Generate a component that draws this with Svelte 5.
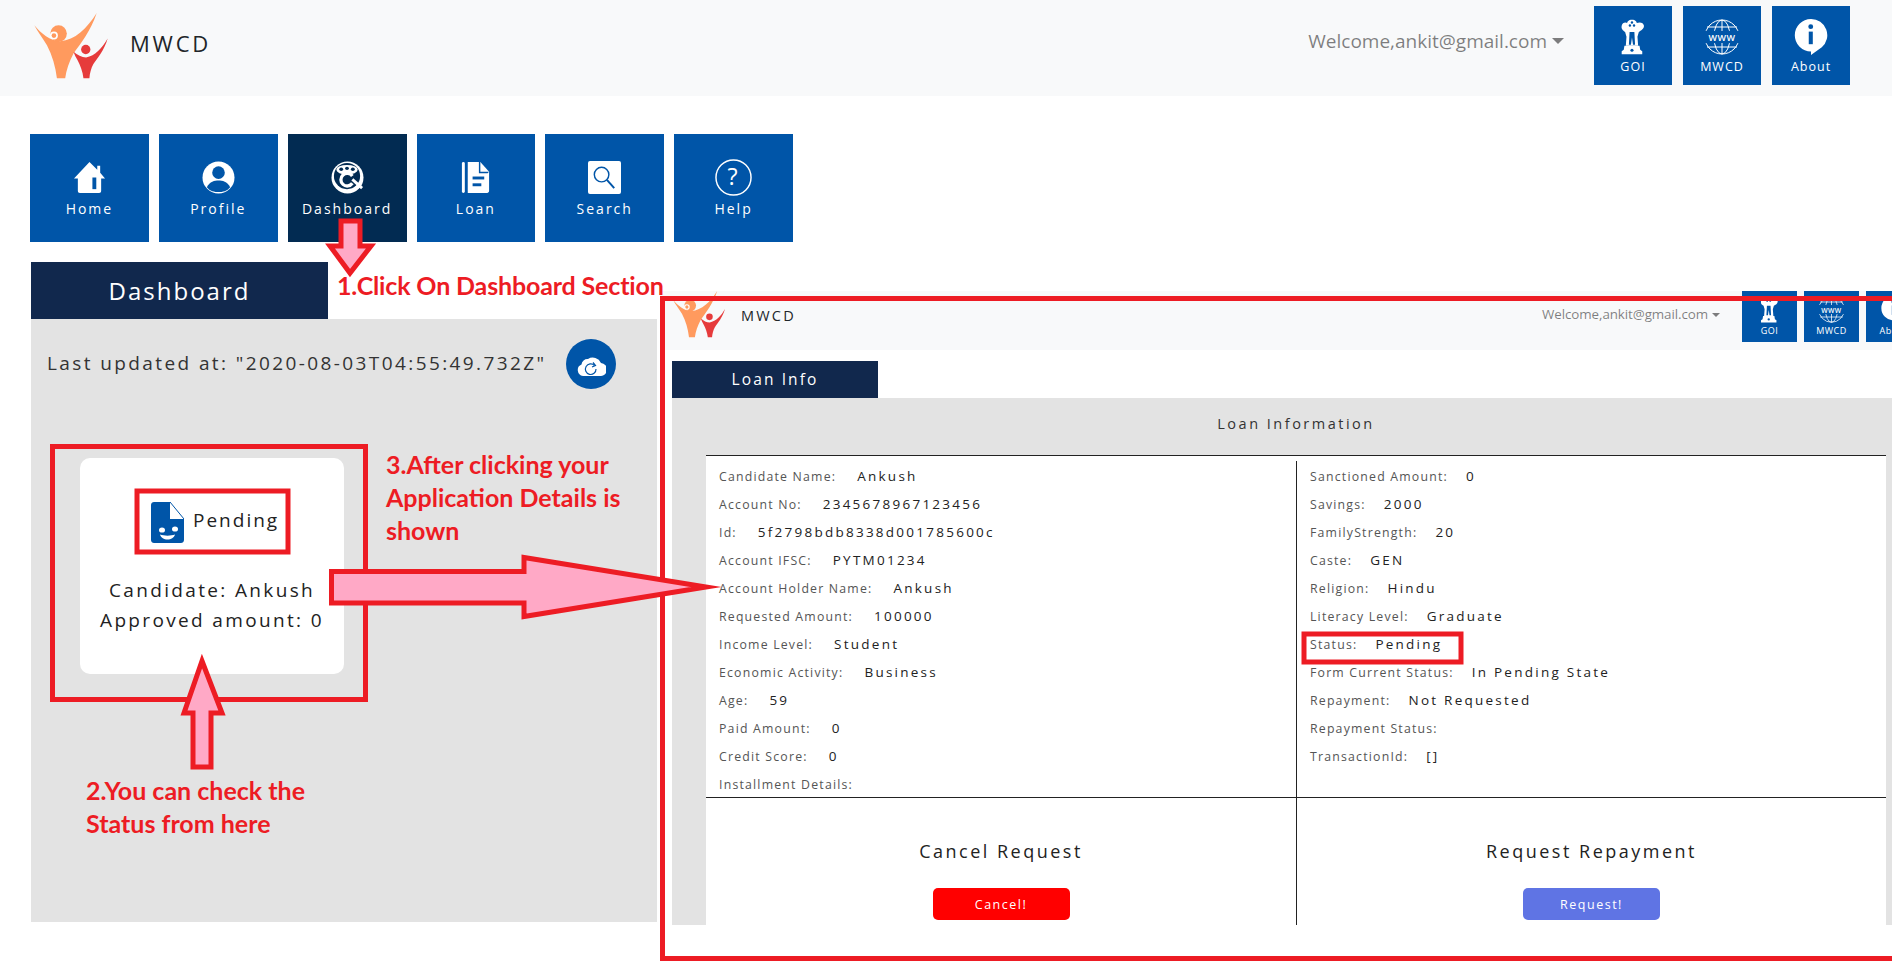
<script>
  const navItems = [
    { name: 'home', label: 'Home' },
    { name: 'profile', label: 'Profile' },
    { name: 'dash', label: 'Dashboard', active: true },
    { name: 'loan', label: 'Loan' },
    { name: 'search', label: 'Search' },
    { name: 'help', label: 'Help' }
  ];
  const topItems = [
    { name: 'goi', label: 'GOI' },
    { name: 'www', label: 'MWCD' },
    { name: 'info', label: 'About' }
  ];
  const leftRows = [
    ['Candidate Name:', 'Ankush'],
    ['Account No:', '2345678967123456'],
    ['Id:', '5f2798bdb8338d001785600c'],
    ['Account IFSC:', 'PYTM01234'],
    ['Account Holder Name:', 'Ankush'],
    ['Requested Amount:', '100000'],
    ['Income Level:', 'Student'],
    ['Economic Activity:', 'Business'],
    ['Age:', '59'],
    ['Paid Amount:', '0'],
    ['Credit Score:', '0'],
    ['Installment Details:', '']
  ];
  const rightRows = [
    ['Sanctioned Amount:', '0'],
    ['Savings:', '2000'],
    ['FamilyStrength:', '20'],
    ['Caste:', 'GEN'],
    ['Religion:', 'Hindu'],
    ['Literacy Level:', 'Graduate'],
    ['Status:', 'Pending'],
    ['Form Current Status:', 'In Pending State'],
    ['Repayment:', 'Not Requested'],
    ['Repayment Status:', ''],
    ['TransactionId:', '[]']
  ];
</script>

{#snippet logo(cls)}
  <svg class={cls} viewBox="42 38 221 202" aria-hidden="true">
    <path fill="#ff9a5e" d="M42 75C62 100 90 122 120 123C165 120 200 85 230 38C212 92 182 130 160 160C147 185 138 210 135 235H110C106 200 96 165 80 135C66 112 52 95 42 75Z"/>
    <circle fill="#ff9a5e" cx="115" cy="100" r="25"/>
    <circle fill="#fff" cx="101" cy="106" r="12"/>
    <circle fill="#ff9a5e" cx="101" cy="106" r="7"/>
    <path fill="#e63b3b" d="M160 155C172 165 185 172 198 172C225 168 248 142 263 115C253 150 232 175 220 192C213 205 209 220 208 235H190C188 215 180 195 172 180C167 172 163 164 160 155Z"/>
    <circle fill="#e63b3b" cx="197" cy="148" r="14"/>
  </svg>
{/snippet}

{#snippet icon(name)}
  {#if name === 'home'}
    <svg class="ico" viewBox="0 0 34 34"><path fill="#fff" d="M17 1L25 9V5H28V12L33 18H29V31C29 32.5 28 33 27 33H7C6 33 5 32.5 5 31V18H1Z"/><rect x="20" y="17" width="4" height="12" fill="#0055a8"/></svg>
  {:else if name === 'profile'}
    <svg class="ico" viewBox="0 0 34 34"><circle cx="17" cy="17" r="16.5" fill="#fff"/><circle cx="17" cy="12" r="6.5" fill="#0055a8"/><path fill="#0055a8" d="M5 27C8 21 13 20 17 20C21 20 26 21 29 27C26 31 21 32 17 32C13 32 8 31 5 27Z"/></svg>
  {:else if name === 'dash'}
    <svg class="ico" viewBox="0 0 34 34"><circle cx="17" cy="17" r="16.500" fill="#fff"/><circle cx="16.500" cy="15.500" r="13.500" fill="#022b52"/><ellipse cx="16.500" cy="9" rx="11" ry="5" fill="#fff"/><ellipse cx="10.500" cy="8.500" rx="2" ry="1.700" fill="#022b52"/><ellipse cx="16.500" cy="7.500" rx="2" ry="1.700" fill="#022b52"/><ellipse cx="22.500" cy="8.500" rx="2" ry="1.700" fill="#022b52"/><path d="M22 15.500A6.500 6.500 0 1 0 22 23" fill="none" stroke="#fff" stroke-width="3.400"/><path d="M22 19L32 28" stroke="#fff" stroke-width="3"/></svg>
  {:else if name === 'loan'}
    <svg class="ico" viewBox="0 0 34 34"><rect x="3" y="1" width="3" height="32" rx="1.5" fill="#fff"/><path fill="#fff" d="M9 1H22L31 11V31C31 32 30 33 29 33H9Z"/><path fill="#0055a8" d="M22 1V11H31L29.500 12.500H20.500V1Z"/><rect x="14" y="16" width="12" height="3" fill="#0055a8"/><rect x="14" y="23" width="9" height="3" fill="#0055a8"/></svg>
  {:else if name === 'search'}
    <svg class="ico" viewBox="0 0 34 34"><rect width="34" height="34" rx="2" fill="#fff"/><circle cx="14" cy="14" r="7.500" fill="none" stroke="#0055a8" stroke-width="1.500"/><path d="M19.500 19.500L27 28" stroke="#0055a8" stroke-width="2"/></svg>
  {:else if name === 'help'}
    <svg class="ico helpico" viewBox="0 0 38 38"><circle cx="19" cy="19" r="18" fill="none" stroke="#fff" stroke-width="1.500"/><text x="19" y="27" text-anchor="middle" fill="#fff" class="q">?</text></svg>
  {:else if name === 'goi'}
    <svg class="tico" viewBox="38 22 70 105">
      <path fill="#fff" d="M70 24C80 24 84 30 84 34C92 30 104 32 105 42C105 52 96 56 90 60L86 74L88 100H52L54 74L50 60C44 56 38 52 40 42C41 32 52 30 56 34C56 30 60 24 70 24Z"/>
      <circle cx="64" cy="41" r="3.500" fill="#0055a8"/><circle cx="76" cy="41" r="3.500" fill="#0055a8"/><circle cx="70" cy="32" r="3.500" fill="#0055a8"/>
      <path fill="#0055a8" d="M63 60H77L79 97H73L70 76L67 97H61Z"/>
      <path fill="#fff" d="M48 100H92L94 112L100 116V125H40V116L46 112Z"/>
      <circle cx="70" cy="113" r="4.500" fill="#0055a8"/>
    </svg>
  {:else if name === 'www'}
    <svg class="tico" viewBox="0 0 36 36" fill="none" stroke="#fff" stroke-width="1"><circle cx="18" cy="18" r="17"/><ellipse cx="18" cy="18" rx="8" ry="17"/><path d="M18 1V35M3 8H33M3 28H33"/><rect x="0" y="12" width="36" height="12" fill="#0055a8" stroke="none"/><text x="18" y="22" text-anchor="middle" class="www">WWW</text></svg>
  {:else}
    <svg class="tico" viewBox="0 0 36 40"><path fill="#fff" d="M18 0A18 18 0 0 1 30 31.500L18 40V36A18 18 0 0 1 18 0Z"/><rect x="15.500" y="14" width="4.500" height="14" fill="#0055a8"/><circle cx="17.700" cy="8.500" r="2.700" fill="#0055a8"/></svg>
  {/if}
{/snippet}

{#snippet rows(list)}
  {#each list as r}
    <div class="row"><span class="lab">{r[0]}</span>{#if r[1]}<span class="val">{r[1]}</span>{/if}</div>
  {/each}
{/snippet}

<div class="page">
  <header class="top">
    {@render logo('logo')}
    <span class="brand">MWCD</span>
    <span class="welcome">Welcome,ankit@gmail.com<i class="caret"></i></span>
    <div class="tiles">
      {#each topItems as t}
        <div class="tile">
          <span class="tbox">{@render icon(t.name)}</span>
          <span>{t.label}</span>
        </div>
      {/each}
    </div>
  </header>

  <nav class="nav">
    {#each navItems as n}
      <div class="navitem" class:active={n.active}>
        <span class="ibox">{@render icon(n.name)}</span>
        <span>{n.label}</span>
      </div>
    {/each}
  </nav>

  <div class="tab">Dashboard</div>
  <section class="panel">
    <div class="updated">
      <span class="stamp">Last updated at: "2020-08-03T04:55:49.732Z"</span>
      <span class="refresh">
        <svg viewBox="0 0 30 24" width="30" height="24"><path fill="#fff" d="M7 24A6 6 0 0 1 5.500 12.500A6 6 0 0 1 12 7A9 9 0 0 1 25 11A6.500 6.500 0 0 1 24 24Z"/><path d="M18.500 13.500A5.300 5.300 0 1 0 20 17" fill="none" stroke="#0055a8" stroke-width="1.200"/><path d="M17 10.500L19.500 13.500L16 15" fill="none" stroke="#0055a8" stroke-width="1.200"/></svg>
      </span>
    </div>
    <div class="card">
      <div class="status">
        <svg viewBox="0 0 33 41" width="33" height="41"><path fill="#0055a8" d="M3 0H19V17H33V38C33 40 31.500 41 30 41H3C1.500 41 0 40 0 38V3C0 1 1.500 0 3 0Z"/><path d="M19 0L33 17" stroke="#0055a8" stroke-width="1"/><ellipse cx="11" cy="28" rx="3" ry="2.600" fill="#fff"/><ellipse cx="24" cy="27" rx="3" ry="2.600" fill="#fff"/><path fill="#fff" d="M9 32.500C13 34 20 34 24 32.500C23 36 20 37.500 16.500 37.500C13 37.500 10 36 9 32.500Z"/></svg>
        <span class="stext">Pending</span>
      </div>
      <p>Candidate: Ankush<br />Approved amount: 0</p>
    </div>
  </section>

  <div class="inset">
    <header class="itop">
      {@render logo('ilogo')}
      <span class="ibrand">MWCD</span>
      <span class="iwelcome">Welcome,ankit@gmail.com<i class="icaret"></i></span>
      <div class="itiles">
        {#each topItems as t}
          <div class="itile">
            <span class="tbox">{@render icon(t.name)}</span>
            <span>{t.label}</span>
          </div>
        {/each}
      </div>
    </header>
    <div class="itab">Loan Info</div>
    <section class="ipanel">
      <div class="ihead">Loan Information</div>
      <div class="sheet">
        <div class="info">
          <div class="col">{@render rows(leftRows)}</div>
          <div class="col divided">{@render rows(rightRows)}</div>
        </div>
        <div class="actions">
          <div class="act">
            <div class="acttitle">Cancel Request</div>
            <button class="btn red">Cancel!</button>
          </div>
          <div class="act">
            <div class="acttitle">Request Repayment</div>
            <button class="btn blue">Request!</button>
          </div>
        </div>
      </div>
    </section>
  </div>

  <svg class="marks" viewBox="0 0 1892 974" aria-hidden="true">
    <g fill="none" stroke="#ed1c24" stroke-width="5">
      <rect x="662.500" y="298.500" width="1300" height="660"/>
      <rect x="52.500" y="446.500" width="313" height="253"/>
      <rect x="137" y="491" width="151" height="61"/>
      <rect x="1304" y="634" width="157" height="28"/>
    </g>
    <g fill="#ffa9c6" stroke="#ed1c24" stroke-width="5" stroke-linejoin="miter" stroke-miterlimit="12">
      <path d="M341 221H360V246H371L350 273L330 246H341Z"/>
      <path d="M202 661L222 713H211V767H193V713H184Z"/>
      <path d="M331.500 571.500H524V557.500L706 587L524 616.500V603H331.500Z"/>
    </g>
  </svg>
  <div class="note n1">1.Click On Dashboard Section</div>
  <div class="note n2">2.You can check the<br />Status from here</div>
  <div class="note n3">3.After clicking your<br />Application Details is<br />shown</div>
</div>

<style>
  :global(body) { margin: 0; background: #fff; }
  .page {
    position: relative;
    width: 1892px;
    height: 974px;
    overflow: hidden;
    font-family: "Open Sans", "Noto Sans", sans-serif;
    color: #212529;
  }
  .top {
    height: 96px;
    box-sizing: border-box;
    padding: 6px 42px 0 34px;
    background: #f8f9fa;
    display: flex;
    align-items: flex-start;
  }
  .logo { width: 74px; height: 67px; margin-top: 7px; flex: none; }
  .brand {
    margin: 22px 0 0 22px;
    font-size: 22px;
    line-height: 30px;
    letter-spacing: 2.800px;
  }
  .welcome {
    margin: 20px 30px 0 auto;
    font-size: 19px;
    line-height: 30px;
    color: rgba(0, 0, 0, .5);
    letter-spacing: 0;
  }
  .caret {
    display: inline-block;
    margin-left: 5px;
    vertical-align: 4px;
    border: 6px solid transparent;
    border-top-color: rgba(0, 0, 0, .5);
    border-bottom: 0;
  }
  .tiles { display: flex; gap: 11px; }
  .tile {
    width: 78px;
    height: 79px;
    background: #0055a8;
    color: #fff;
    font-size: 12.500px;
    letter-spacing: 1px;
    display: flex;
    flex-direction: column;
    align-items: center;
    padding-top: 10px;
    box-sizing: border-box;
    line-height: 18px;
  }
  .tbox { height: 42px; display: flex; align-items: center; justify-content: center; }
  .tico { height: 36px; width: 36px; }
  .nav {
    margin: 38px 0 0 30px;
    width: 763px;
    display: grid;
    grid-template-columns: repeat(6, 1fr);
    gap: 10px;
  }
  .navitem {
    height: 108px;
    box-sizing: border-box;
    padding-top: 27px;
    background: #0055a8;
    color: #fff;
    font-size: 14px;
    line-height: 20px;
    letter-spacing: 2px;
    display: flex;
    flex-direction: column;
    align-items: center;
  }
  .navitem.active { background: #022b52; }
  .ibox { height: 32px; margin-bottom: 6px; display: flex; align-items: center; justify-content: center; }
  .ico { width: 33px; height: 33px; }
  .helpico { width: 37px; height: 37px; }
  .q { font-size: 24px; font-family: "Open Sans", sans-serif; }
  .www { font-size: 9px; fill: #fff; stroke: none; font-family: "Open Sans", sans-serif; font-weight: 600; letter-spacing: .5px; }
  .tab {
    margin: 20px 0 0 31px;
    width: 297px;
    height: 57px;
    background: #11284d;
    color: #fff;
    font-size: 24px;
    letter-spacing: 2px;
    line-height: 57px;
    text-align: center;
  }
  .panel {
    margin-left: 31px;
    width: 626px;
    height: 603px;
    background: #e3e3e3;
    box-sizing: border-box;
    padding-top: 20px;
  }
  .updated {
    display: flex;
    align-items: center;
    gap: 19px;
    padding-left: 16px;
    font-size: 19px;
    letter-spacing: 2.400px;
    color: #333;
  }
  .stamp { margin-bottom: 2px; }
  .refresh {
    width: 50px;
    height: 50px;
    border-radius: 50%;
    background: #0055a8;
    display: flex;
    align-items: center;
    justify-content: center;
  }
  .card {
    margin: 69px 0 0 49px;
    width: 264px;
    height: 216px;
    box-sizing: border-box;
    padding-top: 44px;
    background: #fff;
    border-radius: 10px;
    text-align: center;
    font-size: 19px;
    letter-spacing: 2.350px;
    color: #222;
  }
  .status { display: flex; align-items: center; gap: 9px; margin-left: 71px; letter-spacing: 2px; }
  .stext { margin-bottom: 5px; }
  .card p { margin: 32px 0 0; line-height: 30px; }

  .inset {
    position: absolute;
    left: 660px;
    top: 291px;
    right: 0;
    height: 634px;
    background: #fff;
    overflow: hidden;
  }
  .itop {
    height: 59px;
    background: #f8f9fa;
    display: flex;
    align-items: flex-start;
    padding-left: 13px;
  }
  .ilogo { width: 52px; height: 47.500px; flex: none; }
  .ibrand {
    margin: 14px 0 0 16px;
    font-size: 14.500px;
    line-height: 22px;
    letter-spacing: 2.200px;
  }
  .iwelcome {
    margin: 12px 22px 0 auto;
    font-size: 13.400px;
    line-height: 22px;
    color: rgba(0, 0, 0, .5);
    letter-spacing: -.1px;
  }
  .icaret {
    display: inline-block;
    margin-left: 4px;
    vertical-align: 2px;
    border: 4px solid transparent;
    border-top-color: rgba(0, 0, 0, .5);
    border-bottom: 0;
  }
  .itiles { width: 150px; flex: none; display: flex; gap: 7px; }
  .itile {
    flex: none;
    width: 55px;
    height: 51px;
    background: #0055a8;
    color: #fff;
    font-size: 9px;
    line-height: 12px;
    display: flex;
    flex-direction: column;
    align-items: center;
    box-sizing: border-box;
    padding-top: 3px;
    letter-spacing: .5px;
  }
  .itile .tbox { height: 31px; }
  .itile .tico { width: 27px; height: 27px; }
  .itab {
    margin: 11px 0 0 12px;
    width: 206px;
    height: 37px;
    background: #11284d;
    color: #fff;
    font-size: 15.500px;
    letter-spacing: 2.100px;
    line-height: 37px;
    text-align: center;
  }
  .ipanel {
    margin-left: 12px;
    height: 527px;
    background: #e3e3e3;
    box-sizing: border-box;
    padding: 0 6px 0 34px;
  }
  .ihead {
    height: 57px;
    line-height: 52px;
    text-align: center;
    font-size: 14.500px;
    letter-spacing: 2.500px;
    color: #333;
  }
  .sheet {
    height: 470px;
    background: #fff;
    border-top: 1px solid #222;
    box-sizing: border-box;
  }
  .info {
    height: 342px;
    box-sizing: border-box;
    display: grid;
    grid-template-columns: 590px 590px;
    border-bottom: 1px solid #222;
  }
  .col { padding: 5px 0 0 13px; height: 336px; }
  .divided { border-left: 1px solid #222; height: 336px; margin-top: 5px; padding-top: 0; }
  .divided .lab { margin-right: 18px; }
  .row { height: 28px; line-height: 28px; white-space: nowrap; }
  .lab { font-size: 12.300px; letter-spacing: 1.200px; color: #555; margin-right: 21px; }
  .val { font-size: 13.500px; letter-spacing: 2.250px; color: #222; font-weight: 500; }
  .actions { display: grid; grid-template-columns: 590px 590px; height: 127px; }
  .act { padding-top: 39px; text-align: center; box-sizing: border-box; }
  .act + .act { border-left: 1px solid #222; }
  .acttitle { font-size: 18px; letter-spacing: 2.500px; line-height: 28px; color: #222; }
  .btn {
    margin-top: 23px;
    width: 137px;
    height: 32px;
    border: 0;
    border-radius: 5px;
    color: #fff;
    font-family: inherit;
    font-size: 12.500px;
    letter-spacing: 1.500px;
    display: inline-block;
    padding: 0;
  }
  .red { background: #ff0000; }
  .blue { background: #5f74e4; }

  .marks { position: absolute; left: 0; top: 0; width: 1892px; height: 974px; pointer-events: none; }
  .note {
    position: absolute;
    color: #ed1c24;
    font-family: Lato, "Open Sans", sans-serif;
    font-weight: 700;
    font-size: 25px;
    line-height: 33px;
    white-space: nowrap;
  }
  .n1 { left: 337px; top: 269px; letter-spacing: -.15px; }
  .n2 { left: 86px; top: 774px; }
  .n3 { left: 386px; top: 448px; }
</style>
